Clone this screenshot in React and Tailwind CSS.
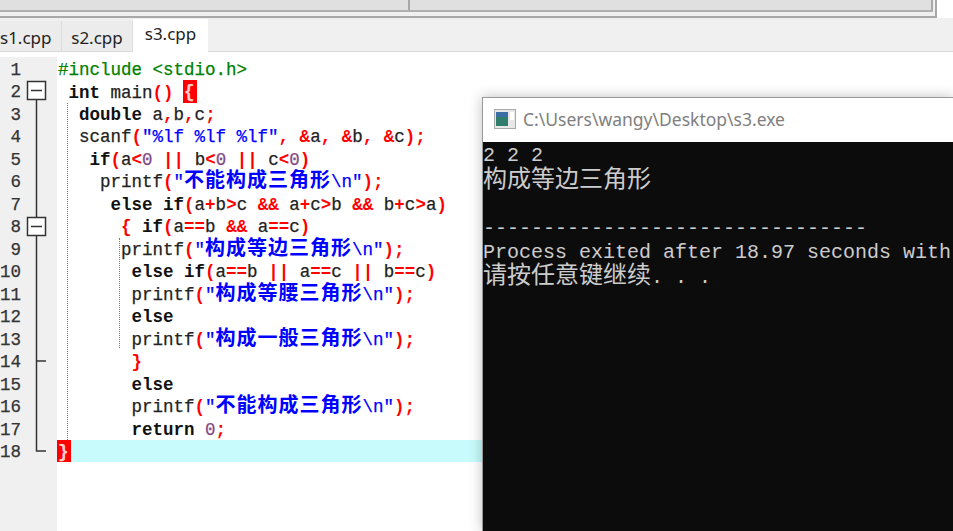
const CODE_FONT = "font-['Liberation_Mono','Noto_Sans_CJK_SC',monospace]";

const LINES = [
  "#include <stdio.h>",
  " int main() {",
  "  double a,b,c;",
  '  scanf("%lf %lf %lf", &a, &b, &c);',
  "   if(a<0 || b<0 || c<0)",
  '    printf("不能构成三角形\\n");',
  "     else if(a+b>c && a+c>b && b+c>a)",
  "      { if(a==b && a==c)",
  '      printf("构成等边三角形\\n");',
  "       else if(a==b || a==c || b==c)",
  '       printf("构成等腰三角形\\n");',
  "       else",
  '       printf("构成一般三角形\\n");',
  "       }",
  "       else",
  '       printf("不能构成三角形\\n");',
  "       return 0;",
  "}",
];

const TOKEN_RE = /("[^"]*")|(\b(?:int|double|if|else|return)\b)|(\b\d+\b)|([(){}<>=|&+,;]+)|(\s+)|([^\s"(){}<>=|&+,;]+)/g;

function Str({ text }) {
  // CJK runs take two code cells each
  const parts = text.split(/([\u4e00-\u9fff]+)/);
  return (
    <span className="font-bold text-[#0000ff]">
      {parts.map((p, i) =>
        /[\u4e00-\u9fff]/.test(p) ? (
          <span key={i} className="text-[20px] tracking-[1px] [-webkit-text-stroke:0]">{p}</span>
        ) : (
          <span key={i} className="font-normal">{p}</span>
        )
      )}
    </span>
  );
}

function CodeLine({ text, index }) {
  if (index === 0) return <span className="text-[#008000]">{text}</span>;
  const out = [];
  let m;
  TOKEN_RE.lastIndex = 0;
  let n = 0;
  while ((m = TOKEN_RE.exec(text))) {
    n++;
    if (m[1]) out.push(<Str key={n} text={m[1]} />);
    else if (m[2]) out.push(<span key={n} className="font-bold text-[#111] [-webkit-text-stroke:0]">{m[2]}</span>);
    else if (m[3]) out.push(<span key={n} className="text-[#864a86]">{m[3]}</span>);
    else if (m[4]) {
      const isMatch = (index === 1 && m[4] === "{") || (index === 17 && m[4] === "}");
      out.push(
        <span
          key={n}
          className={
            isMatch
              ? "relative -top-px inline-block h-[22.47px] leading-[24.47px] -ml-px pl-px pr-[2px] -mr-[2px] font-bold text-[#ffd0d0] bg-[#ff0000]"
              : "font-bold text-[#ff0000] [-webkit-text-stroke:0]"
          }
        >
          {m[4]}
        </span>
      );
    } else out.push(<span key={n}>{m[0]}</span>);
  }
  return <>{out}</>;
}

function FoldMarks() {
  return (
    <svg width="55" height="404" className="absolute left-0 top-0" fill="none">
      <path d="M36.5 42V394H46M36.5 304H46" stroke="#333" strokeWidth="1.5" />
      <g>
        <rect x="27.5" y="24.5" width="18" height="18" fill="#fff" stroke="#333" strokeWidth="1.5" />
        <path d="M31 33.5H42" stroke="#333" strokeWidth="1.5" />
        <rect x="27.5" y="160.5" width="18" height="18" fill="#fff" stroke="#333" strokeWidth="1.5" />
        <path d="M31 169.5H42" stroke="#333" strokeWidth="1.5" />
      </g>
    </svg>
  );
}

function Editor() {
  return (
    <div className={`relative flex flex-1 pt-[5px] bg-white ${CODE_FONT} text-[17.5px] text-[#222] [-webkit-text-stroke:0.25px]`}>
      <div className="relative w-[57px] shrink-0 pt-[1px] bg-[#f0f0f0] min-h-[474px]">
        {LINES.map((_, i) => (
          <div key={i} className="h-[22.47px] pt-[1px] leading-[22.47px] w-[21px] text-right text-[#333]">{i + 1}</div>
        ))}
        <FoldMarks />
      </div>
      <div className="relative flex-1 pt-[1px]">
        {LINES.map((text, i) => (
          <div key={i} className={`h-[22.47px] pt-[1px] pl-[1px] leading-[22.47px] whitespace-pre ${i === 17 ? "bg-[#c8fcfc]" : ""}`}>
            <CodeLine text={text} index={i} />
          </div>
        ))}
        <div className="absolute left-[10px] top-[46px] h-[337px] border-l border-dotted border-[#777]" />
        <div className="absolute left-[62px] top-[181px] h-[110px] border-l border-dotted border-[#777]" />
      </div>
    </div>
  );
}

function TopBars() {
  return (
    <div className="h-[18px] w-[937px] bg-[#f0f0f0] border-b-2 border-r-2 border-[#a8a8a8]">
      <div className="flex h-[12px] w-[933px] bg-[#e0e0e0] border-b-2 border-[#b0b0b0]">
        <div className="w-[410px] border-r-2 border-[#a8a8a8]" />
        <div className="flex-1 border-r-2 border-[#a8a8a8]" />
      </div>
    </div>
  );
}

function Tabs() {
  return (
    <div className="flex items-end h-[34px] bg-[#f0f0f0] border-b border-[#d9d9d9] font-['Noto_Sans',sans-serif] text-[17px] text-[#222]">
      <div className="flex items-center h-[30px] w-[62px] pt-[3px] bg-[#ececec] border-r border-[#dcdcdc]">s1.cpp</div>
      <div className="flex items-center justify-center h-[30px] w-[71px] pt-[3px] bg-[#ececec] border-r border-[#dcdcdc]">s2.cpp</div>
      <div className="flex items-center justify-center h-[33px] w-[75px] -mb-px pb-1 bg-white">s3.cpp</div>
    </div>
  );
}

function ConsoleIcon() {
  return (
    <svg width="22" height="20" viewBox="0 0 22 20" className="shrink-0">
      <rect x="0.5" y="0.5" width="21" height="19" fill="#e8e8e8" stroke="#aaa" />
      <rect x="2" y="3" width="12" height="14" fill="#2f7d6a" />
      <rect x="2" y="3" width="12" height="5" fill="#3a6ea5" />
      <rect x="16" y="3" width="4" height="8" fill="#fff" />
    </svg>
  );
}

function ConsoleWindow() {
  return (
    <div className="absolute left-[482px] top-[97px] w-[471px] h-[434px] flex flex-col overflow-hidden border-l border-t border-[#999] shadow-[0_0_12px_rgba(0,0,0,0.25)]">
      <div className="flex items-center gap-[7px] h-[44px] pl-[11px] pb-[2px] bg-white font-['Noto_Sans',sans-serif] text-[17.5px] text-[#808080]">
        <ConsoleIcon />
        <span>C:\Users\wangy\Desktop\s3.exe</span>
      </div>
      <div className="flex-1 bg-[#0c0c0c] pt-[2px] font-['Liberation_Mono','Noto_Sans_CJK_SC',monospace] text-[20px] leading-[24.3px] text-[#cccccc] whitespace-pre">
        <div>2 2 2</div>
        <div className="text-[24px] pt-px -mb-px">构成等边三角形</div>
        <div>&nbsp;</div>
        <div>--------------------------------</div>
        <div>Process exited after 18.97 seconds with</div>
        <div><span className="text-[24px]">请按任意键继续</span>. . .</div>
      </div>
    </div>
  );
}

export default function App() {
  return (
    <div className="relative flex flex-col w-[953px] h-[531px] overflow-hidden bg-white">
      <TopBars />
      <Tabs />
      <Editor />
      <ConsoleWindow />
    </div>
  );
}
